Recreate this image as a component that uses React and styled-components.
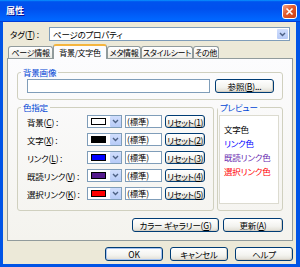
import React from 'react';
import styled, { createGlobalStyle } from 'styled-components';

const GlobalStyle = createGlobalStyle`
  html, body { margin: 0; padding: 0; background: #fff; }
  body {
    font-family: "Noto Sans CJK JP", "Noto Sans", sans-serif;
    font-size: 8.5px;
    letter-spacing: -0.2px;
    font-feature-settings: "palt";
    color: #000;
  }
  * { box-sizing: border-box; }
`;

const WindowUI = styled.div`
  width: 300px;
  height: 267px;
  display: flex;
  flex-direction: column;
  background: #0054e6;
  overflow: hidden;
`;

const TitleBarUI = styled.div`
  height: 22px;
  flex: none;
  display: flex;
  align-items: center;
  justify-content: space-between;
  padding: 0 3px 0 6px;
  background: linear-gradient(180deg, #0997ff, #0053ee 8%, #0050ee 40%, #0066ff 88%, #0066ff 93%, #005bff 95%, #003dd7 96%, #003dd7);
  color: #fff;
  font-weight: bold;
  font-size: 9px;
  line-height: 10px;
  letter-spacing: 0;
  text-shadow: 1px 1px #0f1089;
`;

const CloseUI = styled.div`
  width: 15px;
  height: 15px;
  border: 1px solid #fff;
  border-radius: 3px;
  background: linear-gradient(135deg, #f4a487, #e2592b 45%, #cc3f14);
  display: flex;
  align-items: center;
  justify-content: center;
`;

const BodyUI = styled.div`
  flex: 1;
  margin: 0 4px 4px 3px;
  background: #ece9d8;
  display: flex;
  flex-direction: column;
  padding: 5px 3px 3px 4px;
`;

const TagRowUI = styled.div`
  display: flex;
  align-items: center;
  height: 14px;
`;

const TagLabelUI = styled.div`
  width: 42px;
  padding-left: 3px;
  line-height: 10px;
`;

const ComboUI = styled.div`
  width: 241px;
  height: 14px;
  border: 1px solid #7f9db9;
  background: #fff;
  display: flex;
  align-items: center;
  justify-content: space-between;
  padding: 0 1px 0 3px;
  line-height: 10px;
`;

const DropUI = styled.div`
  width: 11px;
  height: ${p => p.$h || 10}px;
  background: linear-gradient(#d0defd, #b7cbf7);
  border-radius: 1px;
  display: flex;
  align-items: center;
  justify-content: center;
  flex: none;
`;

const TabStripUI = styled.div`
  display: flex;
  align-items: flex-end;
  height: 14px;
  margin-top: 3px;
  padding-left: 1px;
`;

const TabUI = styled.div`
  width: ${p => p.$w}px;
  height: ${p => (p.$active ? 15 : 12)}px;
  margin-bottom: ${p => (p.$active ? -1 : 0)}px;
  border: 1px solid #919b9c;
  border-bottom: none;
  border-top: ${p => (p.$active ? '2px solid #f5b53e' : '1px solid #919b9c')};
  border-radius: 3px 3px 0 0;
  background: ${p => (p.$active ? '#fcfcfe' : 'linear-gradient(#ffffff, #ecebe5)')};
  display: flex;
  align-items: center;
  justify-content: center;
  font-size: 8px;
  line-height: 10px;
  letter-spacing: -0.3px;
  white-space: nowrap;
  position: relative;
  z-index: ${p => (p.$active ? 1 : 0)};
`;

const PanelUI = styled.div`
  height: 183px;
  border: 1px solid #919b9c;
  background: linear-gradient(#fcfcfe, #f4f3ee);
  padding: 8px 9px;
  display: flex;
  flex-direction: column;
`;

const GroupUI = styled.fieldset`
  margin: 0;
  min-width: 0;
  border: 1px solid #d0d0bf;
  border-radius: 3px;
  padding: ${p => p.$pad};
  width: ${p => (p.$w ? `${p.$w}px` : 'auto')};
  flex: ${p => (p.$w ? 'none' : '1')};
`;

const LegendUI = styled.legend`
  color: #0046d5;
  padding: 0 2px;
  line-height: 10px;
  margin-left: ${p => p.$ml}px;
`;

const InputRowUI = styled.div`
  display: flex;
  align-items: center;
  gap: 5px;
`;

const InputUI = styled.div`
  flex: 1;
  height: 14px;
  border: 1px solid #7f9db9;
  background: #fff;
`;

const ButtonUI = styled.div`
  width: ${p => p.$w}px;
  height: ${p => p.$h || 14}px;
  flex: none;
  border: 1px solid #003c74;
  border-radius: 3px;
  background: linear-gradient(#ffffff, #f3f3ef 60%, #e0ddd3);
  box-shadow: ${p => (p.$default ? 'inset 0 0 0 1px #a6c3f0' : 'inset -1px -1px 0 #d6d0c5')};
  display: flex;
  align-items: center;
  justify-content: center;
  line-height: 10px;
  letter-spacing: ${p => (p.$tight ? '-0.4px' : '-0.2px')};
  white-space: nowrap;
`;

const GroupRowUI = styled.div`
  display: flex;
  gap: 3px;
  margin-top: 2px;
`;

const ColorListUI = styled.div`
  display: flex;
  flex-direction: column;
  gap: 5px;
`;

const ColorRowUI = styled.div`
  display: flex;
  align-items: center;
  gap: 3px;
  height: 13px;
`;

const RowLabelUI = styled.div`
  width: 57px;
  line-height: 10px;
  white-space: nowrap;
`;

const SwatchBoxUI = styled.div`
  width: 35px;
  height: 13px;
  border: 1px solid #7f9db9;
  background: #fff;
  display: flex;
  align-items: center;
  justify-content: space-between;
  padding: 0 0 0 3px;
`;

const SwatchUI = styled.div`
  width: 15px;
  height: 7px;
  border: 1px solid #000;
  background: ${p => p.$c};
`;

const StdFieldUI = styled.div`
  width: 37px;
  height: 13px;
  border: 1px solid #7f9db9;
  background: #fff;
  padding-left: 1px;
  line-height: 11px;
`;

const PreviewBoxUI = styled.div`
  height: 89px;
  border: 1px solid #dcdbd0;
  background: #fff;
  padding: 6px 0 0 4px;
  display: flex;
  flex-direction: column;
`;

const PreviewTextUI = styled.div`
  line-height: 14px;
  color: ${p => p.$c};
  white-space: nowrap;
`;

const ButtonRowUI = styled.div`
  display: flex;
  justify-content: flex-end;
  gap: ${p => p.$gap}px;
  margin-top: ${p => p.$mt}px;
`;

const Chevron = () => (
  <svg width="7" height="5" viewBox="0 0 7 5">
    <path d="M1 1 L3.5 3.5 L6 1" fill="none" stroke="#4d6185" strokeWidth="1.4" />
  </svg>
);

const colors = [
  { label: '背景', key: 'C', color: '#ffffff', n: '1' },
  { label: '文字', key: 'X', color: '#000000', n: '2' },
  { label: 'リンク', key: 'L', color: '#0000ff', n: '3' },
  { label: '既読リンク', key: 'V', color: '#551a8b', n: '4' },
  { label: '選択リンク', key: 'K', color: '#ff0000', n: '5' },
];

const tabs = [
  { label: 'ページ情報', w: 45 },
  { label: '背景/文字色', w: 54, active: true },
  { label: 'メタ情報', w: 34 },
  { label: 'スタイルシート', w: 52 },
  { label: 'その他', w: 26 },
];

export default function App() {
  return (
    <>
      <GlobalStyle />
      <WindowUI>
        <TitleBarUI>
          <span>属性</span>
          <CloseUI>
            <svg width="9" height="9" viewBox="0 0 9 9">
              <path d="M1.5 1.5 L7.5 7.5 M7.5 1.5 L1.5 7.5" stroke="#fff" strokeWidth="1.6" />
            </svg>
          </CloseUI>
        </TitleBarUI>

        <BodyUI>
          <TagRowUI>
            <TagLabelUI>タグ(<u>T</u>) :</TagLabelUI>
            <ComboUI>
              <span>ページのプロパティ</span>
              <DropUI><Chevron /></DropUI>
            </ComboUI>
          </TagRowUI>

          <TabStripUI>
            {tabs.map(t => (
              <TabUI key={t.label} $w={t.w} $active={t.active}>{t.label}</TabUI>
            ))}
          </TabStripUI>

          <PanelUI>
            <GroupUI $pad="2px 8px 6px 9px">
              <LegendUI $ml={-6}>背景画像</LegendUI>
              <InputRowUI>
                <InputUI />
                <ButtonUI $w={59}>参照(<u>B</u>)...</ButtonUI>
              </InputRowUI>
            </GroupUI>

            <GroupRowUI>
              <GroupUI $w={197} $pad="3px 8px 10px 9px">
                <LegendUI $ml={-6}>色指定</LegendUI>
                <ColorListUI>
                  {colors.map(c => (
                    <ColorRowUI key={c.key}>
                      <RowLabelUI>{c.label}(<u>{c.key}</u>) :</RowLabelUI>
                      <SwatchBoxUI>
                        <SwatchUI $c={c.color} />
                        <DropUI $h={11}><Chevron /></DropUI>
                      </SwatchBoxUI>
                      <StdFieldUI>(標準)</StdFieldUI>
                      <ButtonUI $w={40} $h={13} $tight>リセット(<u>{c.n}</u>)</ButtonUI>
                    </ColorRowUI>
                  ))}
                </ColorListUI>
              </GroupUI>

              <GroupUI $pad="3px 3px 6px 1px">
                <LegendUI $ml={-1}>プレビュー</LegendUI>
                <PreviewBoxUI>
                  <PreviewTextUI $c="#000">文字色</PreviewTextUI>
                  <PreviewTextUI $c="#0000ff">リンク色</PreviewTextUI>
                  <PreviewTextUI $c="#6a2bb0">既読リンク色</PreviewTextUI>
                  <PreviewTextUI $c="#ff0000">選択リンク色</PreviewTextUI>
                </PreviewBoxUI>
              </GroupUI>
            </GroupRowUI>

            <ButtonRowUI $gap={4} $mt={7}>
              <ButtonUI $w={87}>カラー ギャラリー(<u>G</u>)</ButtonUI>
              <ButtonUI $w={60}>更新(<u>A</u>)</ButtonUI>
            </ButtonRowUI>
          </PanelUI>

          <ButtonRowUI $gap={7} $mt={6}>
            <ButtonUI $w={58} $default>OK</ButtonUI>
            <ButtonUI $w={58}>キャンセル</ButtonUI>
            <ButtonUI $w={58}>ヘルプ</ButtonUI>
          </ButtonRowUI>
        </BodyUI>
      </WindowUI>
    </>
  );
}
